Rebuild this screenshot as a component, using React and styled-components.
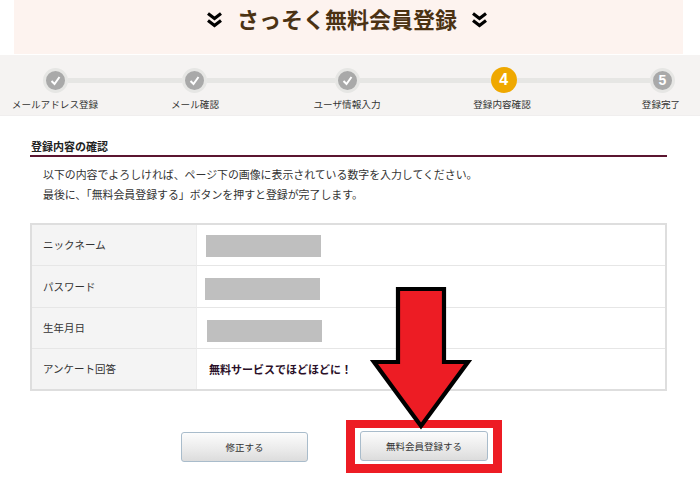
import React from "react";
import styled, { createGlobalStyle } from "styled-components";

const Global = createGlobalStyle`
  html, body { margin: 0; padding: 0; background: #fff; }
  body { width: 700px; height: 478px; overflow: hidden; font-family: "Noto Sans CJK JP", "Liberation Sans", sans-serif; }
`;
const Page = styled.div`position: relative; width: 700px; height: 478px; overflow: hidden;`;
const Hero = styled.header`
  margin: 0 17px 0 14px; height: 54px; background: #fdf3ef;
  display: flex; justify-content: center; align-items: flex-start; gap: 14px; padding: 4px 3px 0 0; box-sizing: border-box;
`;
const HeroTitle = styled.h1`margin: 0; font-size: 22px; line-height: 30px; font-weight: 700; color: #4b3213; margin-top: -1px;`;
const HeroIcon = styled.svg`width: 17px; height: 16px; margin-top: 8px; flex: none;`;
const Stepper = styled.nav`
  margin-top: 1px; height: 61px; background: #f5f3f2; box-sizing: border-box; padding-top: 12px;
  border-bottom: 1px solid #f0eeee;
`;
const Track = styled.div`display: flex; align-items: center; height: 26px; padding: 0 25px 0 43px;`;
const Segment = styled.div`flex: ${p => p.$grow} 1 0; height: 5px; background: #e6e6e4;`;
const Dot = styled.div`
  width: ${p => p.$active ? 26 : 25}px; height: ${p => p.$active ? 26 : 25}px; border-radius: 50%; flex: none; box-sizing: border-box;
  background: ${p => p.$active ? "#efa800" : "#a9a9a9"};
  border: ${p => p.$active ? "none" : "3px solid #e6e6e4"};
  display: flex; align-items: center; justify-content: center; color: #fff;
  font: 700 ${p => p.$active ? 16 : 14}px/1 "Liberation Sans", sans-serif;
`;
const Labels = styled.div`display: grid; grid-template-columns: 110px 170px 134px 176px 142px; margin-top: 4px;`;
const Label = styled.span`text-align: center; font-size: 9.6px; line-height: 14px; color: #333;`;
const Main = styled.main`padding: 21px 33px 0 30px;`;
const Heading = styled.h2`
  margin: 0; font-size: 11px; line-height: 18px; font-weight: 700; color: #222; padding-left: 1px;
  border-bottom: 2px solid #5b1530; height: 20px; box-sizing: border-box;
`;
const Lead = styled.p`margin: 7px 0 0 13px; font-size: 10.9px; line-height: 20px; color: #333;`;
const Table = styled.div`margin-top: 19px; border: 2px solid #dedede; display: grid; grid-template-columns: 165px 1fr; grid-template-rows: 41px 42px 41px 40px;`;
const Th = styled.div`
  background: #f4f4f4; display: flex; align-items: center; padding: 0 0 1px 11px; font-size: 10.5px; color: #333; box-sizing: border-box;
  border-right: 1px solid #ececec; border-bottom: ${p => p.$last ? "none" : "1px solid #e6e6e6"};
`;
const Td = styled.div`
  display: flex; align-items: center; padding-left: ${p => p.$pad}px; background: #fff; box-sizing: border-box;
  border-bottom: ${p => p.$last ? "none" : "1px solid #e6e6e6"};
`;
const Mask = styled.div`width: 115px; height: 22px; background: #bfbfbf; margin-top: ${p => p.$shift}px;`;
const Answer = styled.strong`font-size: 11px; font-weight: 700; color: #2b1029; margin-left: 3px;`;
const Actions = styled.div`display: flex; margin-top: 29px; padding-left: 151px; gap: 38px; align-items: center;`;
const Button = styled.button`
  width: ${p => p.$w}px; height: 30px; box-sizing: border-box; padding: 0; border: 1px solid #a9bccb; border-radius: 3px;
  background: linear-gradient(#fcfcfc, #eaeaea 60%, #dcdcdc); color: #333; font: 9.5px "Noto Sans CJK JP", sans-serif;
`;
const Highlight = styled.div`border: solid #ed1c24; border-width: 8px 9px 9px; padding: 3px 5px;`;
const Arrow = styled.svg`position: absolute; left: 368px; top: 286px; width: 108px; height: 146px;`;

const Chev = () => (
  <HeroIcon viewBox="0 0 17 16" fill="none" stroke="#000" strokeWidth="3.2">
    <path d="M2 1.5l6.5 5L15 1.5M2 8.5l6.5 5L15 8.5" />
  </HeroIcon>
);
const Check = () => (
  <svg width="13" height="13" viewBox="0 0 13 13" fill="none" stroke="#fff" strokeWidth="2"><path d="M2.5 7l3 3 5-7" /></svg>
);
const steps = ["メールアドレス登録", "メール確認", "ユーザ情報入力", "登録内容確認", "登録完了"];
const rows = [["ニックネーム", 9, 2], ["パスワード", 8, 5], ["生年月日", 10, 6]];

export default function App() {
  return (
    <Page>
      <Global />
      <Hero><Chev /><HeroTitle>さっそく無料会員登録</HeroTitle><Chev /></Hero>
      <Stepper>
        <Track>
          <Dot><Check /></Dot><Segment $grow={114} /><Dot><Check /></Dot><Segment $grow={128} /><Dot><Check /></Dot><Segment $grow={130} /><Dot $active>4</Dot><Segment $grow={133} /><Dot>5</Dot>
        </Track>
        <Labels>{steps.map(s => <Label key={s}>{s}</Label>)}</Labels>
      </Stepper>
      <Main>
        <Heading>登録内容の確認</Heading>
        <Lead>以下の内容でよろしければ、ページ下の画像に表示されている数字を入力してください。<br />最後に、「無料会員登録する」ボタンを押すと登録が完了します。</Lead>
        <Table>
          {rows.map(([k, pad, shift]) => (
            <React.Fragment key={k}><Th>{k}</Th><Td $pad={pad}><Mask $shift={shift} /></Td></React.Fragment>
          ))}
          <Th $last>アンケート回答</Th><Td $last $pad={9}><Answer>無料サービスでほどほどに！</Answer></Td>
        </Table>
        <Actions>
          <Button $w={127}>修正する</Button>
          <Highlight><Button $w={128}>無料会員登録する</Button></Highlight>
        </Actions>
      </Main>
      <Arrow viewBox="0 0 108 146">
        <path d="M30 3H76V76H100L53 140L6 76H30Z" fill="#ed1c24" stroke="#000" strokeWidth="4.2" />
      </Arrow>
    </Page>
  );
}
